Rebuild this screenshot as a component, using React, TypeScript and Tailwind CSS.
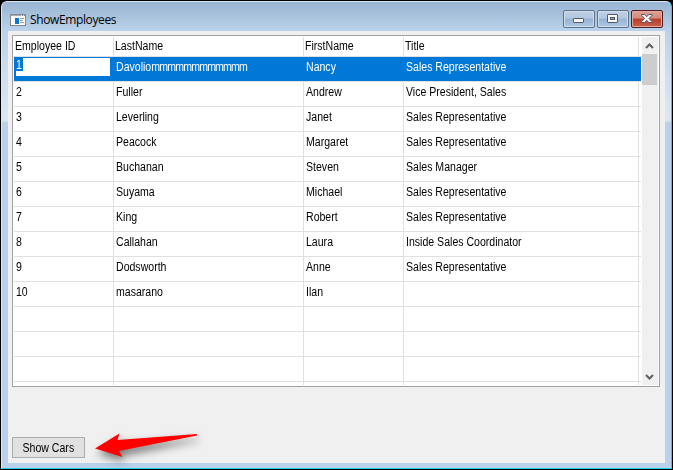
import React from 'react';

type Employee = { id: string; last: string; first: string; title: string };

const employees: Employee[] = [
  { id: '1', last: 'Davoliommmmmmmmmmmm', first: 'Nancy', title: 'Sales Representative' },
  { id: '2', last: 'Fuller', first: 'Andrew', title: 'Vice President, Sales' },
  { id: '3', last: 'Leverling', first: 'Janet', title: 'Sales Representative' },
  { id: '4', last: 'Peacock', first: 'Margaret', title: 'Sales Representative' },
  { id: '5', last: 'Buchanan', first: 'Steven', title: 'Sales Manager' },
  { id: '6', last: 'Suyama', first: 'Michael', title: 'Sales Representative' },
  { id: '7', last: 'King', first: 'Robert', title: 'Sales Representative' },
  { id: '8', last: 'Callahan', first: 'Laura', title: 'Inside Sales Coordinator' },
  { id: '9', last: 'Dodsworth', first: 'Anne', title: 'Sales Representative' },
  { id: '10', last: 'masarano', first: 'Ilan', title: '' },
  { id: '', last: '', first: '', title: '' },
  { id: '', last: '', first: '', title: '' },
  { id: '', last: '', first: '', title: '' },
  { id: '', last: '', first: '', title: '' },
];

const columns = 'grid grid-cols-[100px_190px_100px_235px_2px]';

function Label({ text, className = '' }: { text: React.ReactNode; className?: string }) {
  return (
    <span className={'inline-block origin-left scale-x-[0.88] whitespace-nowrap ' + className}>{text}</span>
  );
}

function AppIcon() {
  return (
    <svg width="16" height="12" viewBox="0 0 16 12" shapeRendering="crispEdges" className="shrink-0">
      <rect width="16" height="12" fill="#858990" />
      <rect x="1" y="2" width="14" height="9" fill="#fafafa" />
      <rect x="1" y="1" width="10" height="1" fill="#a8abb0" />
      <rect x="11" y="1" width="1" height="1" fill="#ddd" />
      <rect x="13" y="1" width="1" height="1" fill="#ddd" />
      <rect x="5" y="4" width="4" height="6" fill="#0878d8" />
      <path d="M10 4h4v1h-4zM10 6h3v1h-3zM10 8h4v1h-4z" fill="#9a9da1" />
    </svg>
  );
}

function TitleButton({ kind }: { kind: 'min' | 'max' | 'close' }) {
  const close = kind === 'close';
  return (
    <button
      className={
        'block h-[18px] w-8 rounded-[2px] border ' +
        (close
          ? 'border-[#541c22] bg-[linear-gradient(#dfa196_0%,#d4897c_45%,#b83d28_50%,#cb614a_100%)] shadow-[inset_0_0_0_1px_#e3a99c]'
          : 'border-[#5e708a] bg-[linear-gradient(#bfd0e5_0%,#b2c7e0_45%,#98b3d2_50%,#acc8e5_100%)] shadow-[inset_0_0_0_1px_#cfdeed]')
      }
    >
      <svg width="30" height="16" viewBox="0 0 30 16" className="block">
        {kind === 'min' && <rect x="9.5" y="7.5" width="10" height="4" rx="0.6" fill="#f8f8f8" stroke="#535666" />}
        {kind === 'max' && (
          <g stroke="#535666" fill="#f8f8f8">
            <rect x="9.5" y="3.5" width="10" height="8" rx="0.6" />
            <rect x="12.5" y="6.5" width="4" height="2" fill="#91acce" />
          </g>
        )}
        {close && (
          <path
            d="M9.5 3.5h3.3l2 2.2 2-2.2h3.3v.7l-3 3.3 3 3.3v.7h-3.3l-2-2.2-2 2.2H9.5v-.7l3-3.3-3-3.3z"
            fill="#f8f8f8"
            stroke="#535666"
          />
        )}
      </svg>
    </button>
  );
}

function Row({ employee, selected }: { employee: Employee; selected: boolean }) {
  if (selected) {
    return (
      <div className={columns + ' h-[25px] border-b border-[#e0e0e0] bg-[#0078d7] text-white'}>
        <div className="pt-px pl-0.5">
          <div className="h-[18px] w-[94px] bg-white">
            <div className="h-[13px] w-[7px] bg-[#0078d7] leading-[14px]">
              <Label text={employee.id} />
            </div>
          </div>
        </div>
        <div className="pt-[3px] pl-0.5">
          <Label
            text={
              <>
                {employee.last.slice(0, 7)}
                <span className="tracking-[-0.92px]">{employee.last.slice(7)}</span>
              </>
            }
          />
        </div>
        <div className="pt-[3px] pl-0.5">
          <Label text={employee.first} />
        </div>
        <div className="pt-[3px] pl-0.5">
          <Label text={employee.title} />
        </div>
      </div>
    );
  }
  const cell = 'border-r border-[#e0e0e0] pt-[3px] pl-0.5';
  return (
    <div className={columns + ' h-[25px] border-b border-[#e0e0e0]'}>
      <div className={cell}>
        <Label text={employee.id} />
      </div>
      <div className={cell}>
        <Label text={employee.last} />
      </div>
      <div className={cell}>
        <Label text={employee.first} />
      </div>
      <div className={cell}>
        <Label text={employee.title} />
      </div>
    </div>
  );
}

export default function App() {
  return (
    <div className="h-[470px] w-[673px] overflow-hidden bg-black p-px font-['Liberation_Sans',Arial,sans-serif] text-[12px] leading-[15px] text-black">
      <div className="flex h-[468px] w-[671px] flex-col rounded-t-[6px] border border-t-[#d8e8f5] border-r-[#24d0ec] border-b-[#24d0ec] border-l-[#dce7f3] bg-[linear-gradient(#99b4d1_0px,#b9d1ea_28px,#c8dbef_60px,#dce8f5_118px,#b9d1ea_121px)] px-1.5 pb-[5px]">
        <header className="flex h-[29px] shrink-0 items-center pr-0.5">
          <div className="flex flex-1 items-center pt-1.5 pl-0.5">
            <AppIcon />
            <h1 className="ml-1 font-['Open_Sans',sans-serif] text-[12px] leading-[16px] tracking-[-0.38px]">ShowEmployees</h1>
          </div>
          <div className="flex gap-0.5 pt-[5px]">
            <TitleButton kind="min" />
            <TitleButton kind="max" />
            <TitleButton kind="close" />
          </div>
        </header>
        <main className="flex flex-1 flex-col bg-[#f0f0f0] px-1 pt-1">
          <section className="flex h-[352px] w-[648px] border border-[#a0a0a5] bg-white p-px">
            <div className="mr-px h-[348px] w-[627px] overflow-hidden">
              <div className={columns + ' h-5 border-b border-[#e0e0e0]'}>
                {['Employee ID', 'LastName', 'FirstName', 'Title'].map((name) => (
                  <div key={name} className="border-r border-[#e0e0e0] pt-0.5 pl-px">
                    <Label text={name} />
                  </div>
                ))}
              </div>
              {employees.map((e, i) => (
                <Row key={i} employee={e} selected={i === 0} />
              ))}
            </div>
            <div className="flex w-4 flex-col bg-[#f0f0f0]">
              <svg width="16" height="17" viewBox="0 0 16 17" className="block shrink-0">
                <path d="M4 11 7.5 7.5 11 11" stroke="#606060" strokeWidth="2" fill="none" />
              </svg>
              <div className="h-[31px] w-[15px] bg-[#cdcdcd]" />
              <div className="flex-1" />
              <svg width="16" height="17" viewBox="0 0 16 17" className="block shrink-0">
                <path d="M4 7 7.5 10.5 11 7" stroke="#606060" strokeWidth="2" fill="none" />
              </svg>
            </div>
          </section>
          <footer className="mt-[50px] flex">
            <button className="h-[21px] w-[73px] border border-[#adadad] bg-[#e1e1e1] pt-px text-center">
              <span className="inline-block scale-x-[0.88] whitespace-nowrap">Show Cars</span>
            </button>
            <svg width="120" height="40" viewBox="0 0 120 40" className="-mt-1 -mb-4 block drop-shadow-[2px_5px_4px_rgba(0,0,0,0.5)]">
              <path d="M10 15.5 34.5.5 32.5 7 112 1v1.5L34 18l3.5 6z" fill="#ff0000" />
            </svg>
          </footer>
        </main>
      </div>
    </div>
  );
}
